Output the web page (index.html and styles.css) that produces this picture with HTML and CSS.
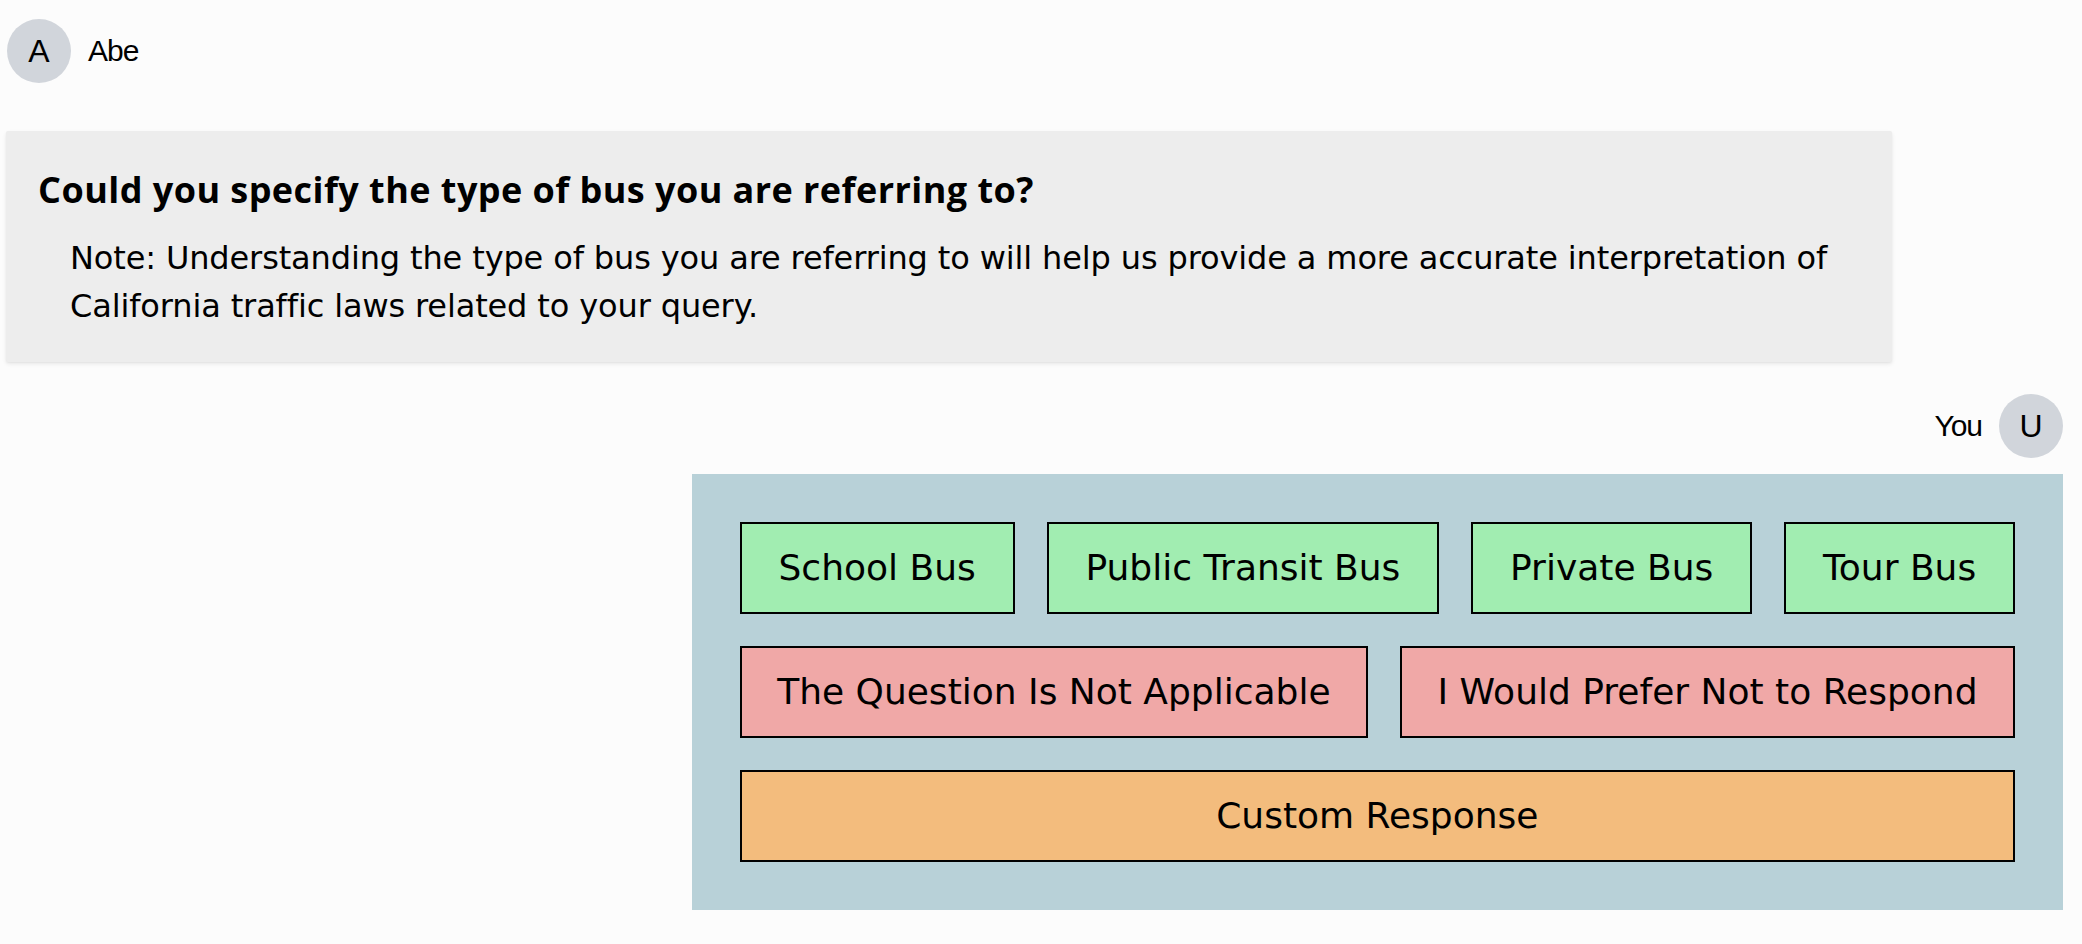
FILE: index.html
```html
<!DOCTYPE html>
<html lang="en">
<head>
<meta charset="utf-8">
<title>Chat</title>
<link rel="stylesheet" href="styles.css">
</head>
<body>
<main class="chat">
  <div class="msg-head">
    <div class="avatar">A</div>
    <span class="name">Abe</span>
  </div>
  <section class="question">
    <h2 class="question-title">Could you specify the type of bus you are referring to?</h2>
    <p class="question-note">Note: Understanding the type of bus you are referring to will help us provide a more accurate interpretation of California traffic laws related to your query.</p>
  </section>
  <div class="msg-head msg-head-user">
    <span class="name">You</span>
    <div class="avatar">U</div>
  </div>
  <section class="options">
    <div class="option-row">
      <button class="opt opt-green">School Bus</button>
      <button class="opt opt-green">Public Transit Bus</button>
      <button class="opt opt-green">Private Bus</button>
      <button class="opt opt-green">Tour Bus</button>
    </div>
    <div class="option-row">
      <button class="opt opt-red">The Question Is Not Applicable</button>
      <button class="opt opt-red">I Would Prefer Not to Respond</button>
    </div>
    <div class="option-row">
      <button class="opt opt-orange">Custom Response</button>
    </div>
  </section>
</main>
</body>
</html>
```
FILE: styles.css
```css
html, body {
  margin: 0;
  padding: 0;
  background: #fcfcfc;
}
body {
  font-family: "DejaVu Sans", sans-serif;
  color: #000;
}
.chat {
  display: flex;
  flex-direction: column;
  padding: 19px 19px 0 6px;
}
.msg-head {
  display: flex;
  align-items: center;
  gap: 17px;
}
.msg-head-user {
  justify-content: flex-end;
  margin-top: 32px;
}
.avatar {
  width: 64px;
  height: 64px;
  border-radius: 50%;
  background: #d1d5db;
  display: flex;
  align-items: center;
  justify-content: center;
  font-family: "Liberation Sans", Arial, sans-serif;
  font-size: 32px;
  color: #000;
  flex: none;
}
.msg-head:first-child .avatar {
  margin-left: 1px;
}
.name {
  font-family: "Liberation Sans", Arial, sans-serif;
  font-size: 30px;
  letter-spacing: -1px;
  color: #000;
}
.question {
  margin-top: 48px;
  width: calc(100% * 11 / 12);
  box-sizing: border-box;
  background: #ededed;
  padding: 32px;
  border-radius: 2px;
  box-shadow: 0 2px 4px rgba(0, 0, 0, 0.08), 0 1px 2px rgba(0, 0, 0, 0.04);
}
.question-title {
  margin: 0;
  font-family: "Open Sans", sans-serif;
  font-weight: 700;
  font-size: 36px;
  line-height: 54px;
  letter-spacing: 0.45px;
}
.question-note {
  margin: 17px 0 0;
  padding-left: 32px;
  font-family: "DejaVu Sans", sans-serif;
  font-size: 32px;
  line-height: 48px;
  letter-spacing: -0.13px;
}
.options {
  align-self: flex-end;
  margin-top: 16px;
  width: calc(100% * 2 / 3);
  box-sizing: border-box;
  background: #b8d1d8;
  padding: 48px;
  display: flex;
  flex-direction: column;
  gap: 32px;
}
.option-row {
  display: flex;
  gap: 32px;
}
.opt {
  flex: 1 1 auto;
  margin: 0;
  border: 2px solid #000;
  border-radius: 0;
  padding: 16px 32px;
  font-family: "DejaVu Sans", sans-serif;
  font-size: 36px;
  line-height: 56px;
  color: #000;
  text-align: center;
  white-space: nowrap;
  cursor: pointer;
}
.opt-green { background: #a1edb1; }
.opt-red { background: #f0a8a7; }
.opt-orange { background: #f3bc7d; }
```
